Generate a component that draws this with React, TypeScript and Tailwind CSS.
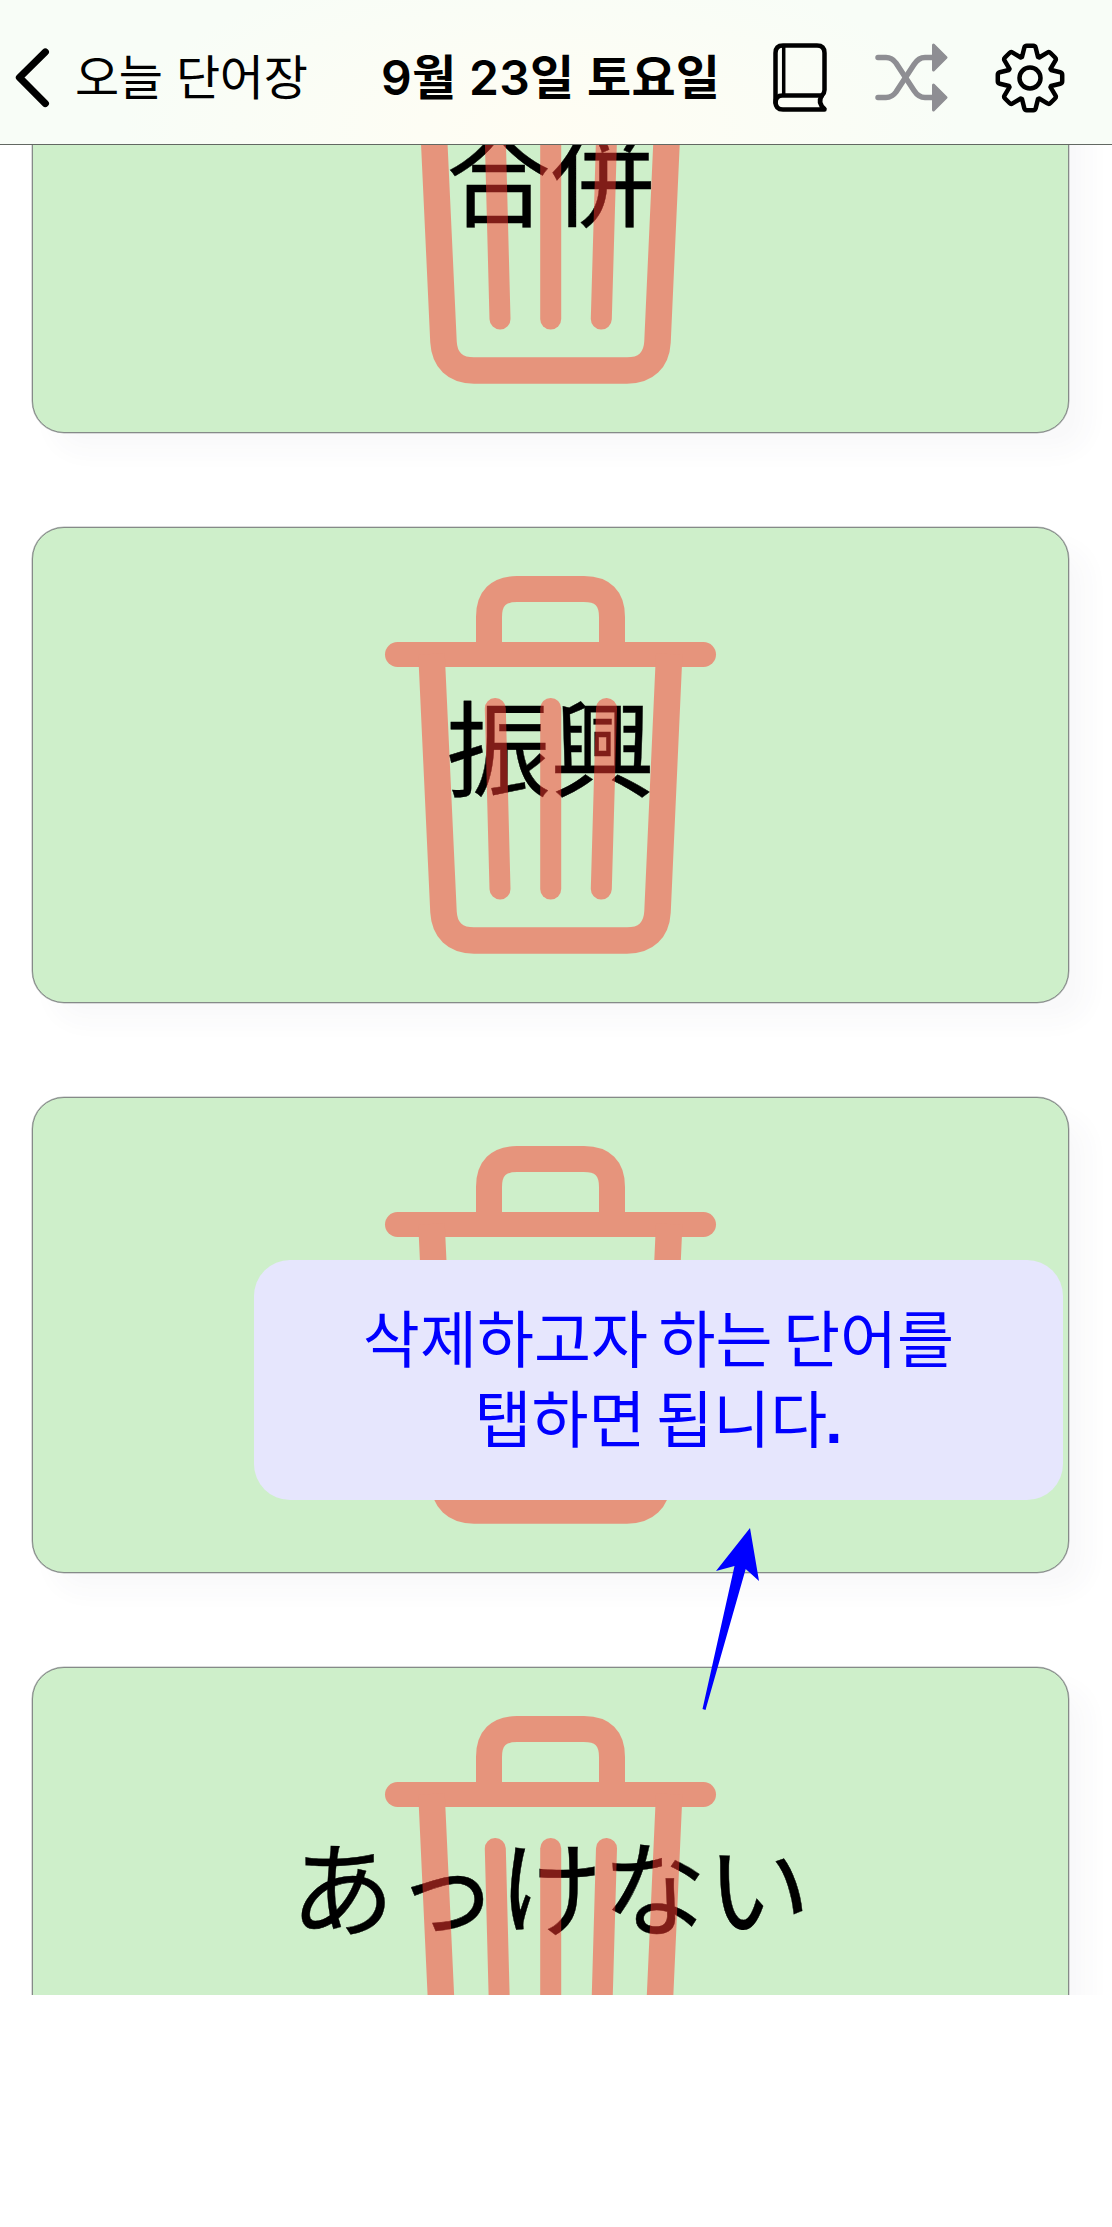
const words = ["合併", "振興", "", "あっけない"];

function Trash() {
  return (
    <svg className="absolute left-[351px] top-[48px] h-[380px] w-[333px] opacity-50" viewBox="0 0 333 380" fill="none" stroke="#ff3b30">
      <path d="M105 78V41Q105 13 133 13H200Q228 13 228 41V78" strokeWidth="26" />
      <path d="M13.500 78.500H319.500" strokeWidth="25" strokeLinecap="round" />
      <path d="M47.500 78L59.500 336C60.500 354 71 364.500 90 364.500H243C262 364.500 272.500 354 273.500 336L285.200 78" strokeWidth="26.500" />
      <g strokeWidth="21" strokeLinecap="round">
        <path d="M111.300 132.500L116 313" />
        <path d="M166.700 132.500V313" />
        <path d="M222.500 132.500L217.300 313" />
      </g>
    </svg>
  );
}

function Card({ word }: { word: string }) {
  return (
    <div className="relative flex h-[476px] w-[1037px] shrink-0 justify-center rounded-[32px] border border-[#858a88] bg-[#ceefca] shadow-[0_0_0_0.5px_#b5b8b8,20px_20px_24px_rgba(60,60,90,0.03)]">
      {word && (
        <span className="mt-[141px] h-[150px] font-['Noto_Sans_CJK_JP',sans-serif] text-[104px] leading-[150px] whitespace-nowrap text-black [-webkit-text-stroke:0.4px_black]" lang="ja">{word}</span>
      )}
      <Trash />
    </div>
  );
}

function BookIcon() {
  return (
    <svg className="h-[70px] w-[56px]" viewBox="0 0 56 70" fill="none" stroke="currentColor" strokeWidth="4.500" strokeLinecap="round" strokeLinejoin="round">
      <path d="M51.500 66.500H10Q2.500 66.500 2.500 59V10Q2.500 2.500 10 2.500H44Q51.500 2.500 51.500 10V47Q51.500 50 49 52.500Q44 59.500 51.500 66" />
      <path d="M49 52.500H9.500Q2.500 52.500 2.500 60" />
      <path d="M10.700 3V52" strokeWidth="3.500" />
    </svg>
  );
}

function ShuffleIcon() {
  return (
    <svg className="h-[70px] w-[74px] text-[#8e8e93]" viewBox="0 0 74 70" fill="none" stroke="currentColor" strokeWidth="5.500" strokeLinecap="round" strokeLinejoin="round">
      <path d="M3 14.500H11Q17 14.500 21 20L39 47.500Q43.500 54.500 50 54.500H60" />
      <path d="M3 54.500H11Q17 54.500 21 49L39 21.500Q43.500 14.500 50 14.500H60" />
      <path d="M58.500 2L71 14.500L58.500 27ZM58.500 42L71 54.500L58.500 67Z" fill="currentColor" strokeWidth="3" />
    </svg>
  );
}

const teeth = [0, 45, 90, 135, 180, 225, 270, 315];
const gearOutline =
  teeth
    .map((deg, i) => {
      const a = (deg * Math.PI) / 180;
      const point = (x: number, y: number) =>
        `${(35 + x * Math.cos(a) - y * Math.sin(a)).toFixed(2)} ${(35 + x * Math.sin(a) + y * Math.cos(a)).toFixed(2)}`;
      return `${i === 0 ? "M" : "L"}${point(-8, -21)}L${point(-5.7, -30.2)}Q${point(-5.2, -32.2)} ${point(-3.2, -32.2)}L${point(3.2, -32.2)}Q${point(5.2, -32.2)} ${point(5.7, -30.2)}L${point(8, -21)}`;
    })
    .join("") + "Z";

function GearIcon() {
  return (
    <svg className="h-[70px] w-[70px]" viewBox="0 0 70 70" fill="none" stroke="currentColor" strokeWidth="4.500" strokeLinejoin="round">
      <path d={gearOutline} />
      <circle cx="35" cy="35" r="10.500" />
    </svg>
  );
}

export default function App() {
  return (
    <div className="relative h-[2227px] w-[1112px] overflow-hidden bg-white font-['Inter','Noto_Sans_CJK_KR',sans-serif] text-black" lang="ko">
      <header className="flex h-[145px] items-center border-b border-[#626862] bg-[#f8fdf7] bg-[radial-gradient(ellipse_420px_170px_at_540px_130px,#fffdf3,#f8fdf7)] pt-3">
        <svg className="ml-[14px] h-[62px] w-[36px]" viewBox="0 0 36 62" fill="none" stroke="currentColor" strokeWidth="7.300" strokeLinecap="round" strokeLinejoin="round">
          <path d="M31.300 5L5.500 30.500L31.300 56.500" />
        </svg>
        <span className="ml-[25px] w-[306px] text-[48px] tracking-[-0.3px] whitespace-nowrap">오늘 단어장</span>
        <h1 className="w-[392px] text-[48px] font-semibold tracking-[0.2px] [word-spacing:0.5px] whitespace-nowrap">9월 23일 토요일</h1>
        <BookIcon />
        <div className="ml-[46px] h-[70px]"><ShuffleIcon /></div>
        <div className="ml-[46px] h-[70px]"><GearIcon /></div>
      </header>
      <main className="flex h-[1850px] flex-col overflow-hidden pl-8">
        <div className="-mt-[188px] flex flex-col gap-[94px]">
          {words.map((w, i) => <Card key={i} word={w} />)}
        </div>
      </main>
      <div className="absolute top-[1260px] left-[254px] flex h-[240px] w-[809px] flex-col items-center justify-center rounded-[36px] bg-[#e6e6fd] pt-[2px] text-center text-[62px] leading-[80px] text-[#0000ff]">
        <span className="[word-spacing:-7px] whitespace-nowrap">삭제하고자 하는 단어를</span>
        <span className="h-20 [word-spacing:-7px] whitespace-nowrap">탭하면 됩니다<b className="-ml-[2px] font-['Liberation_Sans',sans-serif]">.</b></span>
      </div>
      <svg className="absolute top-[1520px] left-[689px] h-[200px] w-[80px]" viewBox="690 1520 80 200" fill="#0000ff">
        <path d="M751 1528L760 1581L746.700 1569L706.500 1710L703.500 1709L735.500 1566L717 1571Z" />
      </svg>
    </div>
  );
}
